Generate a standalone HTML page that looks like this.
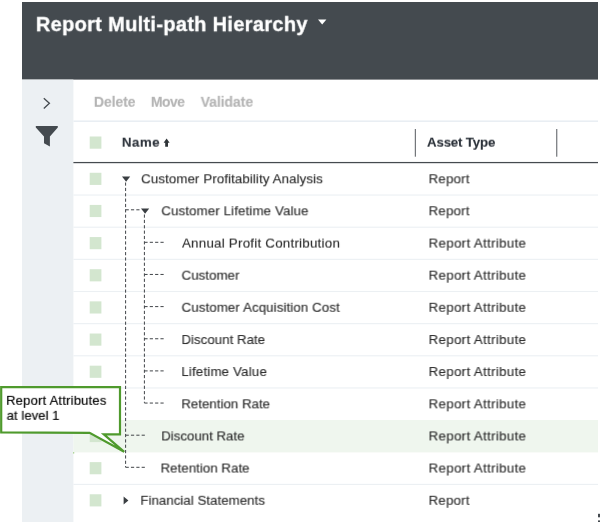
<!DOCTYPE html>
<html><head><meta charset="utf-8"><title>Report Multi-path Hierarchy</title>
<style>
html,body{margin:0;padding:0;background:#fff;}
body{width:600px;height:522px;position:relative;overflow:hidden;font-family:"Liberation Sans",sans-serif;}
svg{position:absolute;left:0;top:0;}
.t{position:absolute;white-space:nowrap;font-family:"Liberation Sans",sans-serif;transform-origin:0 0;will-change:transform;-webkit-text-stroke:0.12px currentColor;}
</style></head><body>
<svg width="600" height="522" viewBox="0 0 600 522">
<rect x="22.00" y="2.00" width="576.00" height="77.60" fill="#444a4f"/>
<rect x="22.00" y="79.60" width="51.40" height="442.40" fill="#ecf0f3"/>
<rect x="73.40" y="120.40" width="524.60" height="1.60" fill="#e9eef3"/>
<rect x="73.40" y="420.00" width="524.60" height="32.40" fill="#eff6ee"/>
<rect x="73.40" y="194.50" width="524.60" height="1.10" fill="#ecf0f3"/>
<rect x="73.40" y="226.65" width="524.60" height="1.10" fill="#ecf0f3"/>
<rect x="73.40" y="258.80" width="524.60" height="1.10" fill="#ecf0f3"/>
<rect x="73.40" y="290.95" width="524.60" height="1.10" fill="#ecf0f3"/>
<rect x="73.40" y="323.10" width="524.60" height="1.10" fill="#ecf0f3"/>
<rect x="73.40" y="355.25" width="524.60" height="1.10" fill="#ecf0f3"/>
<rect x="73.40" y="387.40" width="524.60" height="1.10" fill="#ecf0f3"/>
<rect x="73.40" y="483.85" width="524.60" height="1.10" fill="#ecf0f3"/>
<rect x="73.40" y="161.95" width="524.60" height="1.25" fill="#454a4f"/>
<rect x="414.80" y="129.00" width="1.10" height="27.70" fill="#65696d"/>
<rect x="556.20" y="129.00" width="1.10" height="27.70" fill="#65696d"/>
<rect x="89.70" y="136.50" width="11.70" height="12.20" fill="#d3e6cf"/>
<rect x="89.70" y="172.77" width="11.70" height="12.15" fill="#d3e6cf"/>
<rect x="89.70" y="204.92" width="11.70" height="12.15" fill="#d3e6cf"/>
<rect x="89.70" y="237.07" width="11.70" height="12.15" fill="#d3e6cf"/>
<rect x="89.70" y="269.22" width="11.70" height="12.15" fill="#d3e6cf"/>
<rect x="89.70" y="301.37" width="11.70" height="12.15" fill="#d3e6cf"/>
<rect x="89.70" y="333.52" width="11.70" height="12.15" fill="#d3e6cf"/>
<rect x="89.70" y="365.68" width="11.70" height="12.15" fill="#d3e6cf"/>
<rect x="89.70" y="397.82" width="11.70" height="12.15" fill="#d3e6cf"/>
<rect x="89.70" y="429.97" width="11.70" height="12.15" fill="#d3e6cf"/>
<rect x="89.70" y="462.12" width="11.70" height="12.15" fill="#d3e6cf"/>
<rect x="89.70" y="494.27" width="11.70" height="12.15" fill="#d3e6cf"/>
<path d="M125.60 182.50L125.60 467.30" stroke="#404448" stroke-width="1.0" stroke-dasharray="3.2 2.15" fill="none"/>
<path d="M144.40 214.50L144.40 402.90" stroke="#404448" stroke-width="1.0" stroke-dasharray="3.2 2.15" fill="none"/>
<path d="M125.60 209.80L140.50 209.80" stroke="#404448" stroke-width="1.0" stroke-dasharray="3.2 2.15" fill="none"/>
<path d="M144.40 242.30L164.80 242.30" stroke="#404448" stroke-width="1.0" stroke-dasharray="3.2 2.15" fill="none"/>
<path d="M144.40 274.45L164.80 274.45" stroke="#404448" stroke-width="1.0" stroke-dasharray="3.2 2.15" fill="none"/>
<path d="M144.40 306.60L164.80 306.60" stroke="#404448" stroke-width="1.0" stroke-dasharray="3.2 2.15" fill="none"/>
<path d="M144.40 338.75L164.80 338.75" stroke="#404448" stroke-width="1.0" stroke-dasharray="3.2 2.15" fill="none"/>
<path d="M144.40 370.90L164.80 370.90" stroke="#404448" stroke-width="1.0" stroke-dasharray="3.2 2.15" fill="none"/>
<path d="M144.40 403.05L164.80 403.05" stroke="#404448" stroke-width="1.0" stroke-dasharray="3.2 2.15" fill="none"/>
<path d="M125.60 435.20L145.00 435.20" stroke="#404448" stroke-width="1.0" stroke-dasharray="3.2 2.15" fill="none"/>
<path d="M125.60 467.30L145.00 467.30" stroke="#404448" stroke-width="1.0" stroke-dasharray="3.2 2.15" fill="none"/>
<path d="M122 176.4h8.2l-4.1 5.4z" fill="#3a3e42"/>
<path d="M141 208.4h8.2l-4.1 5.4z" fill="#3a3e42"/>
<path d="M123.6 496.5v8l4.8-4z" fill="#3a3e42"/>
<path d="M318 19.6h8.4l-4.2 4.9z" fill="#fff"/>
<path d="M166.6 138.6l3 4.2h-1.6v3.9h-2.8v-3.9h-1.6z" fill="#2f3438"/>
<path d="M43.8 98.2l5.6 5.1-5.6 5.1" fill="none" stroke="#444a4f" stroke-width="1.3"/>
<path d="M35.8 126h22v1.6l-7.9 8.8v10.2l-5.9-3.4v-6.8l-8.2-8.8z" fill="#444a4f"/>
<rect x="598.00" y="513.80" width="2.00" height="3.50" fill="#444a4f"/>
<rect x="598.00" y="520.40" width="2.00" height="1.60" fill="#444a4f"/>
<rect x="73.20" y="452.40" width="1.00" height="1.00" fill="#6bb33f"/>
<path d="M1.2 387.2L120 387.2L120 434.3L103.8 434.3L124.2 451.8L89.6 432.9L1.2 432.3Z" fill="#fff" stroke="#4f9a2d" stroke-width="2.2" stroke-linejoin="miter"/>
</svg>
<span id="title" class="t" style="left:35px;top:12px;transform:translate(0.85px,0.15px) skewX(0.03deg);font-size:20.0px;line-height:24.0px;font-weight:700;color:#fff;letter-spacing:0.316px;-webkit-text-stroke:0.3px #fff">Report Multi-path Hierarchy</span>
<span id="del" class="t" style="left:93px;top:93px;transform:translate(0.90px,0.81px) skewX(0.03deg);font-size:14.0px;line-height:16.8px;font-weight:700;color:#b4b4b4;letter-spacing:-0.100px">Delete</span>
<span id="mov" class="t" style="left:150px;top:93px;transform:translate(0.90px,0.81px) skewX(0.03deg);font-size:14.0px;line-height:16.8px;font-weight:700;color:#b4b4b4;letter-spacing:-0.583px">Move</span>
<span id="val" class="t" style="left:200px;top:93px;transform:translate(0.65px,0.81px) skewX(0.03deg);font-size:14.0px;line-height:16.8px;font-weight:700;color:#b4b4b4;letter-spacing:-0.072px">Validate</span>
<span id="name" class="t" style="left:121px;top:134px;transform:translate(0.90px,0.70px) skewX(0.03deg);font-size:13.3px;line-height:15.96px;font-weight:700;color:#2c323a;letter-spacing:0.497px">Name</span>
<span id="atype" class="t" style="left:427px;top:134px;transform:translate(0.00px,0.70px) skewX(0.03deg);font-size:13.3px;line-height:15.96px;font-weight:700;color:#2c323a;letter-spacing:-0.173px">Asset Type</span>
<span id="r1" class="t" style="left:141px;top:171px;transform:translate(0.15px,0.30px) skewX(0.03deg);font-size:13.3px;line-height:15.96px;font-weight:400;color:#2b2b2b;letter-spacing:0.095px">Customer Profitability Analysis</span>
<span id="r2" class="t" style="left:161px;top:203px;transform:translate(0.35px,0.30px) skewX(0.03deg);font-size:13.3px;line-height:15.96px;font-weight:400;color:#2b2b2b;letter-spacing:0.114px">Customer Lifetime Value</span>
<span id="r3" class="t" style="left:182px;top:235px;transform:translate(0.05px,0.60px) skewX(0.03deg);font-size:13.3px;line-height:15.96px;font-weight:400;color:#2b2b2b;letter-spacing:0.250px">Annual Profit Contribution</span>
<span id="r4" class="t" style="left:181px;top:267px;transform:translate(0.55px,0.70px) skewX(0.03deg);font-size:13.3px;line-height:15.96px;font-weight:400;color:#2b2b2b;letter-spacing:0.039px">Customer</span>
<span id="r5" class="t" style="left:181px;top:299px;transform:translate(0.55px,0.80px) skewX(0.03deg);font-size:13.3px;line-height:15.96px;font-weight:400;color:#2b2b2b;letter-spacing:0.093px">Customer Acquisition Cost</span>
<span id="r6" class="t" style="left:181px;top:332px;transform:translate(0.45px,0.05px) skewX(0.03deg);font-size:13.3px;line-height:15.96px;font-weight:400;color:#2b2b2b;letter-spacing:0.017px">Discount Rate</span>
<span id="r7" class="t" style="left:181px;top:364px;transform:translate(0.35px,0.05px) skewX(0.03deg);font-size:13.3px;line-height:15.96px;font-weight:400;color:#2b2b2b;letter-spacing:0.173px">Lifetime Value</span>
<span id="r8" class="t" style="left:181px;top:396px;transform:translate(0.35px,0.35px) skewX(0.03deg);font-size:13.3px;line-height:15.96px;font-weight:400;color:#2b2b2b;letter-spacing:0.002px">Retention Rate</span>
<span id="r9" class="t" style="left:161px;top:428px;transform:translate(0.25px,0.45px) skewX(0.03deg);font-size:13.3px;line-height:15.96px;font-weight:400;color:#2b2b2b;letter-spacing:-0.018px">Discount Rate</span>
<span id="r10" class="t" style="left:160px;top:460px;transform:translate(0.55px,0.55px) skewX(0.03deg);font-size:13.3px;line-height:15.96px;font-weight:400;color:#2b2b2b;letter-spacing:0.022px">Retention Rate</span>
<span id="r11" class="t" style="left:140px;top:492px;transform:translate(0.35px,0.80px) skewX(0.03deg);font-size:13.3px;line-height:15.96px;font-weight:400;color:#2b2b2b;letter-spacing:0.025px">Financial Statements</span>
<span id="c1" class="t" style="left:6px;top:392px;transform:translate(0.15px,0.86px) skewX(0.03deg);font-size:13.0px;line-height:15.6px;font-weight:400;color:#000;letter-spacing:0.218px;-webkit-text-stroke:0.16px #000">Report Attributes</span>
<span id="c2" class="t" style="left:6px;top:407px;transform:translate(0.65px,0.86px) skewX(0.03deg);font-size:13.0px;line-height:15.6px;font-weight:400;color:#000;letter-spacing:0.090px;-webkit-text-stroke:0.16px #000">at level 1</span>
<span id="a1" class="t" style="left:428px;top:171px;transform:translate(0.55px,0.30px) skewX(0.03deg);font-size:13.3px;line-height:15.96px;font-weight:400;color:#2b2b2b;letter-spacing:0.200px">Report</span>
<span id="a2" class="t" style="left:428px;top:203px;transform:translate(0.55px,0.30px) skewX(0.03deg);font-size:13.3px;line-height:15.96px;font-weight:400;color:#2b2b2b;letter-spacing:0.200px">Report</span>
<span id="a3" class="t" style="left:428px;top:235px;transform:translate(0.55px,0.60px) skewX(0.03deg);font-size:13.3px;line-height:15.96px;font-weight:400;color:#2b2b2b;letter-spacing:0.333px">Report Attribute</span>
<span id="a4" class="t" style="left:428px;top:267px;transform:translate(0.55px,0.70px) skewX(0.03deg);font-size:13.3px;line-height:15.96px;font-weight:400;color:#2b2b2b;letter-spacing:0.333px">Report Attribute</span>
<span id="a5" class="t" style="left:428px;top:299px;transform:translate(0.55px,0.80px) skewX(0.03deg);font-size:13.3px;line-height:15.96px;font-weight:400;color:#2b2b2b;letter-spacing:0.333px">Report Attribute</span>
<span id="a6" class="t" style="left:428px;top:332px;transform:translate(0.55px,0.05px) skewX(0.03deg);font-size:13.3px;line-height:15.96px;font-weight:400;color:#2b2b2b;letter-spacing:0.333px">Report Attribute</span>
<span id="a7" class="t" style="left:428px;top:364px;transform:translate(0.55px,0.05px) skewX(0.03deg);font-size:13.3px;line-height:15.96px;font-weight:400;color:#2b2b2b;letter-spacing:0.333px">Report Attribute</span>
<span id="a8" class="t" style="left:428px;top:396px;transform:translate(0.55px,0.35px) skewX(0.03deg);font-size:13.3px;line-height:15.96px;font-weight:400;color:#2b2b2b;letter-spacing:0.333px">Report Attribute</span>
<span id="a9" class="t" style="left:428px;top:428px;transform:translate(0.55px,0.45px) skewX(0.03deg);font-size:13.3px;line-height:15.96px;font-weight:400;color:#2b2b2b;letter-spacing:0.333px">Report Attribute</span>
<span id="a10" class="t" style="left:428px;top:460px;transform:translate(0.55px,0.55px) skewX(0.03deg);font-size:13.3px;line-height:15.96px;font-weight:400;color:#2b2b2b;letter-spacing:0.333px">Report Attribute</span>
<span id="a11" class="t" style="left:428px;top:492px;transform:translate(0.55px,0.80px) skewX(0.03deg);font-size:13.3px;line-height:15.96px;font-weight:400;color:#2b2b2b;letter-spacing:0.200px">Report</span>
</body></html>
